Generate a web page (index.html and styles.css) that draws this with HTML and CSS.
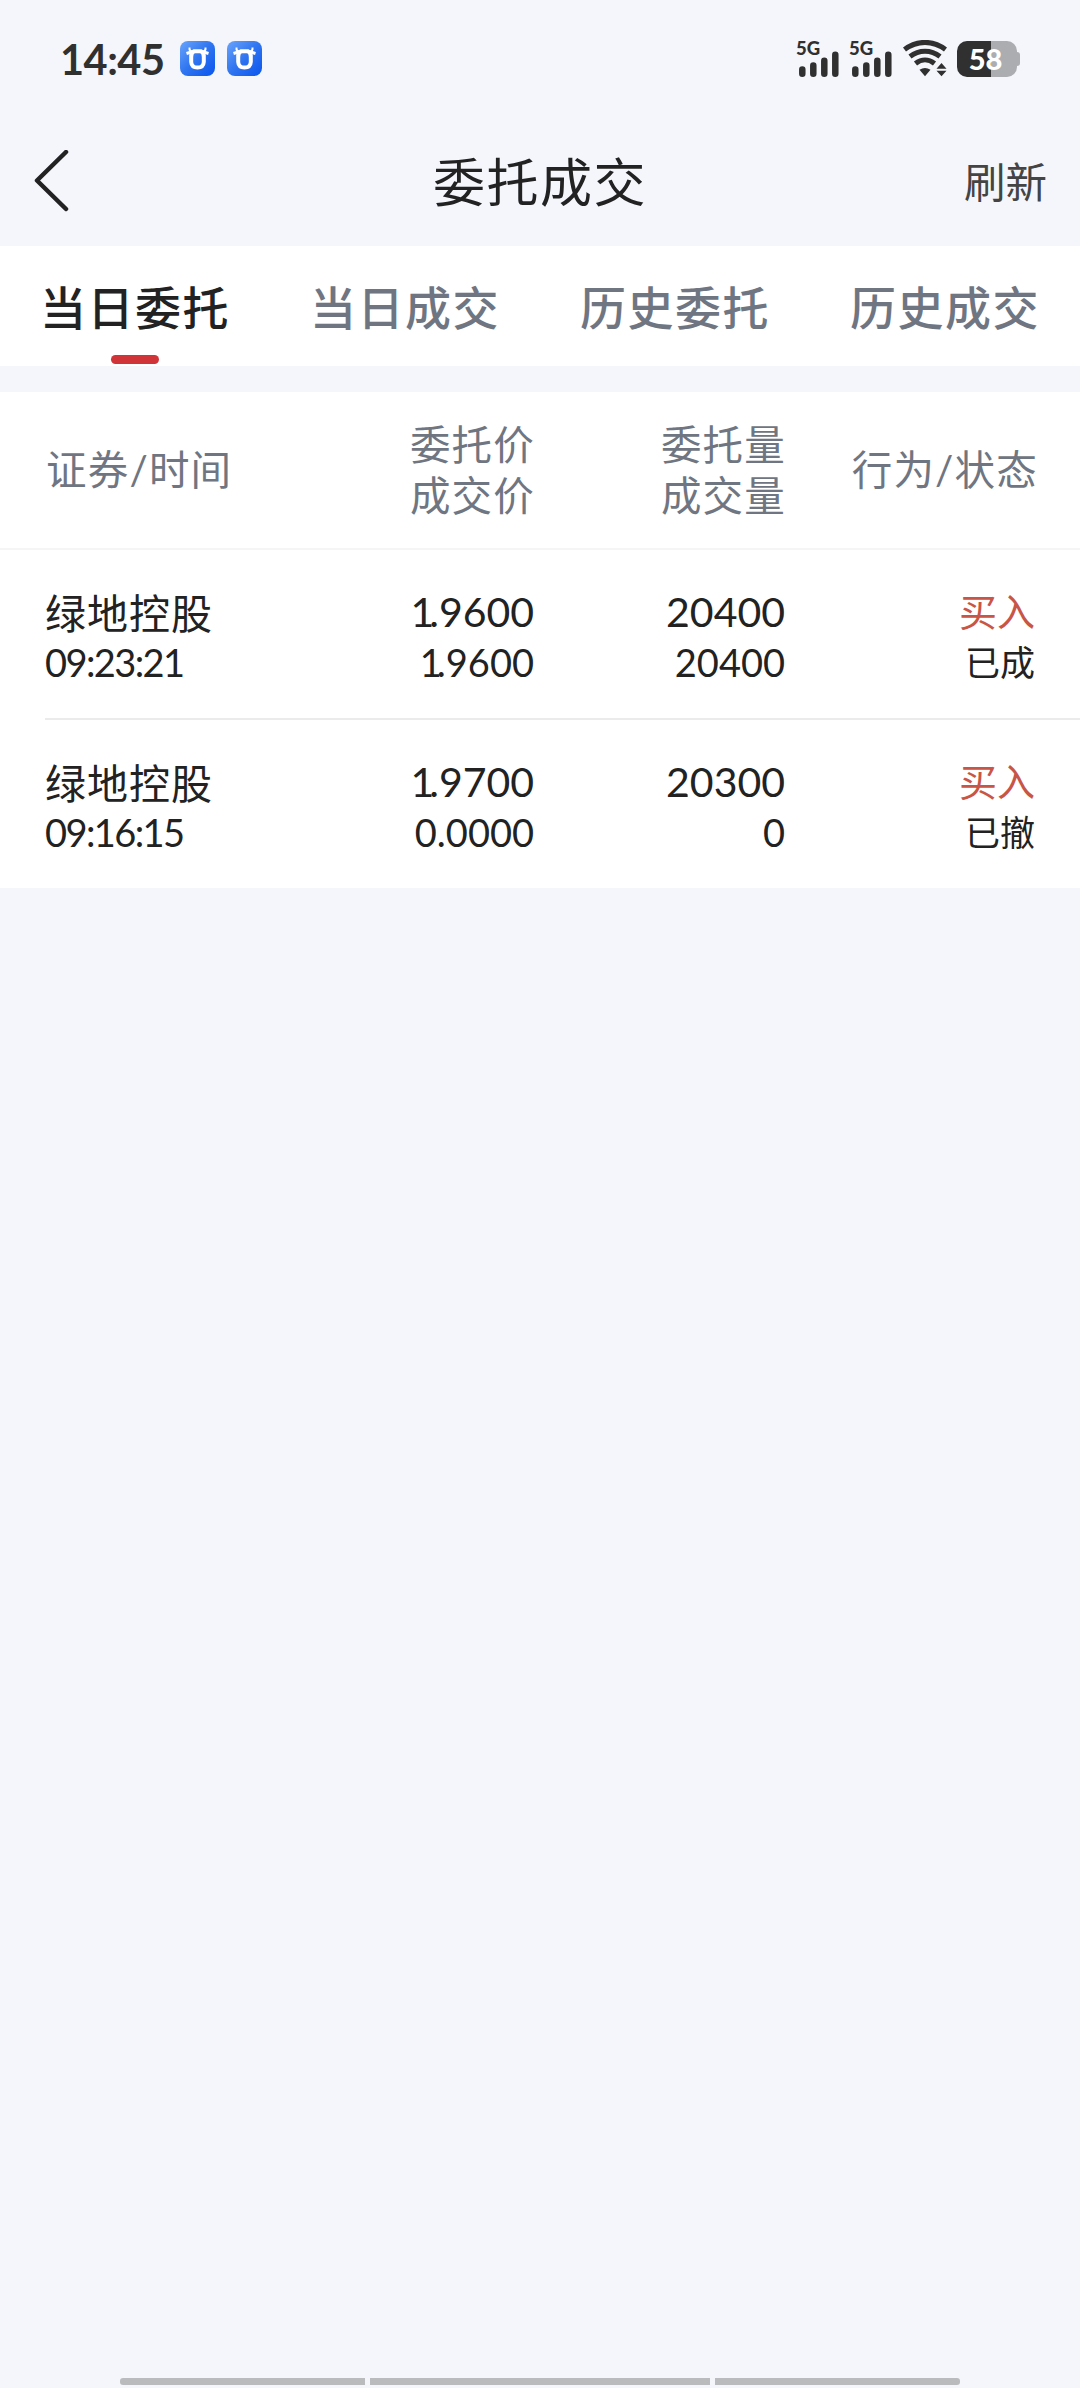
FILE: index.html
```html
<!DOCTYPE html>
<html lang="zh-CN">
<head>
  <meta charset="UTF-8">
  <title>委托成交</title>
  <link rel="stylesheet" href="styles.css">
</head>
<body>
  <div class="status-bar">
    <span class="clock">14:45</span>
    <svg class="app-icon" viewBox="0 0 35 35">
      <defs>
        <linearGradient id="appBlue" x1="0" y1="0" x2="1" y2="1">
          <stop offset="0" stop-color="#69a4fb"/>
          <stop offset="0.5" stop-color="#2f74f0"/>
          <stop offset="1" stop-color="#0a55ee"/>
        </linearGradient>
      </defs>
      <rect width="35" height="35" rx="8" fill="url(#appBlue)"/>
      <path d="M9.5 6.5C9.2 9 10.2 10.3 12.5 10.5M25.5 6.5C25.8 9 24.8 10.3 22.5 10.5" fill="none" stroke="#fff" stroke-width="2"/>
      <path d="M6.5 12.5L12 10.8M28.5 12.5L23 10.8" stroke="#fff" stroke-width="3"/>
      <path d="M14 10.3H21Q24 12 23.8 16V21Q23.5 26.5 17.5 26.5Q11.5 26.5 11.2 21V16Q11 12 14 10.3Z" fill="none" stroke="#fff" stroke-width="4"/>
    </svg>
    <svg class="app-icon" viewBox="0 0 35 35">
      <rect width="35" height="35" rx="8" fill="url(#appBlue)"/>
      <path d="M9.5 6.5C9.2 9 10.2 10.3 12.5 10.5M25.5 6.5C25.8 9 24.8 10.3 22.5 10.5" fill="none" stroke="#fff" stroke-width="2"/>
      <path d="M6.5 12.5L12 10.8M28.5 12.5L23 10.8" stroke="#fff" stroke-width="3"/>
      <path d="M14 10.3H21Q24 12 23.8 16V21Q23.5 26.5 17.5 26.5Q11.5 26.5 11.2 21V16Q11 12 14 10.3Z" fill="none" stroke="#fff" stroke-width="4"/>
    </svg>
    <div class="system-icons">
      <div class="signal">
        <span>5G</span>
        <svg viewBox="0 0 43 37">
          <path d="M5.3 29.5V33.7M16.3 25.5V33.7M27.3 20.7V33.7M38.3 14.7V33.7"/>
        </svg>
      </div>
      <div class="signal">
        <span>5G</span>
        <svg viewBox="0 0 43 37">
          <path d="M5.3 29.5V33.7M16.3 25.5V33.7M27.3 20.7V33.7M38.3 14.7V33.7"/>
        </svg>
      </div>
      <svg class="wifi" viewBox="0 0 44 37">
        <path class="arc" d="M1.5 9.5C14 0 30 0 42.5 9.5M7 16.5C16 9.5 28 9.5 37 16.5M12.5 23.5C18.5 18.7 25.5 18.7 31.5 23.5"/>
        <path d="M16.5 29.8Q22 26.3 27.5 29.8L22 36.3ZM38.5 23L43.5 28.8H33.5ZM33.5 30.7H43.5L38.5 36.3Z"/>
      </svg>
      <div class="battery">58</div>
    </div>
  </div>

  <div class="nav">
    <svg class="back" viewBox="0 0 36 64">
      <path d="M33 2L4 30.5L33 59"/>
    </svg>
    <h1>委托成交</h1>
    <span class="refresh">刷新</span>
  </div>

  <div class="tabs">
    <div class="tab active">当日委托</div>
    <div class="tab">当日成交</div>
    <div class="tab">历史委托</div>
    <div class="tab">历史成交</div>
  </div>

  <div class="orders">
    <div class="row head">
      <div class="name">证券/时间</div>
      <div class="price">委托价<br>成交价</div>
      <div class="amount">委托量<br>成交量</div>
      <div class="state">行为/状态</div>
    </div>
    <div class="row">
      <div class="name"><p class="cn">绿地控股</p><p class="sub time">09:23:21</p></div>
      <div class="price"><p><span class="one">1</span>.9600</p><p class="sub"><span class="one">1</span>.9600</p></div>
      <div class="amount"><p>20400</p><p class="sub">20400</p></div>
      <div class="state"><p class="buy">买入</p><p class="sub">已成</p></div>
    </div>
    <div class="row">
      <div class="name"><p class="cn">绿地控股</p><p class="sub time">09:16:15</p></div>
      <div class="price"><p><span class="one">1</span>.9700</p><p class="sub">0.0000</p></div>
      <div class="amount"><p>20300</p><p class="sub">0</p></div>
      <div class="state"><p class="buy">买入</p><p class="sub">已撤</p></div>
    </div>
  </div>

  <div class="gesture-bar">
    <i></i><i></i><i></i>
  </div>
</body>
</html>
```
FILE: styles.css
```css
* {
  box-sizing: border-box;
}

body {
  display: flex;
  flex-direction: column;
  width: 1080px;
  height: 2388px;
  margin: 0;
  background: #f4f6fb;
  color: #222;
  font-family: Lato, "Noto Sans CJK SC", sans-serif;
  overflow: hidden;
}

h1,
p {
  margin: 0;
  font-weight: 400;
}

svg {
  display: block;
}

/* 状态栏 */
.status-bar {
  display: flex;
  align-items: center;
  height: 117px;
  padding: 0 60px;
  color: #303030;
}

.clock {
  width: 120px;
  font-size: 41.5px;
  font-weight: 700;
  line-height: 50px;
  letter-spacing: -0.5px;
}

.app-icon {
  width: 35px;
  height: 35px;
  margin-right: 12px;
}

.system-icons {
  display: flex;
  align-items: center;
  margin-left: auto;
}

.signal {
  position: relative;
  width: 43px;
  height: 37px;
  margin-right: 10px;
}

.signal span {
  position: absolute;
  left: -1px;
  top: -4px;
  font-size: 18.5px;
  font-weight: 900;
  line-height: 24px;
}

.signal path {
  fill: none;
  stroke: #303030;
  stroke-width: 6.5;
  stroke-linecap: round;
}

.wifi {
  width: 44px;
  height: 37px;
  margin-right: 10px;
  fill: #303030;
}

.wifi .arc {
  fill: none;
  stroke: #303030;
  stroke-width: 5;
}

.battery {
  position: relative;
  width: 60px;
  height: 36px;
  margin-right: 3px;
  padding-right: 3px;
  border-radius: 10px;
  background: linear-gradient(90deg, #303030 34px, #acadb1 34px);
  color: #fff;
  font-size: 29px;
  font-weight: 900;
  line-height: 36px;
  text-align: center;
}

.battery::after {
  content: '';
  position: absolute;
  top: 11px;
  right: -3px;
  width: 3px;
  height: 14px;
  border-radius: 0 3px 3px 0;
  background: #acadb1;
}

/* 标题栏 */
.nav {
  display: grid;
  grid-template-columns: 200px 1fr 200px;
  align-items: center;
  height: 129px;
  padding: 0 33px;
}

.back {
  width: 36px;
  height: 64px;
  fill: none;
  stroke: #222;
  stroke-width: 4.5;
  stroke-linecap: round;
  stroke-linejoin: round;
}

.nav h1 {
  font-size: 52px;
  line-height: 70px;
  letter-spacing: 1.5px;
  text-align: center;
}

.refresh {
  color: #444;
  font-size: 41.5px;
  line-height: 60px;
  text-align: right;
}

/* 标签页 */
.tabs {
  display: grid;
  grid-template-columns: repeat(4, 1fr);
  height: 120px;
  background: #fff;
}

.tab {
  position: relative;
  color: #6f7682;
  font-size: 46px;
  font-weight: 500;
  line-height: 124px;
  letter-spacing: 1.5px;
  text-align: center;
}

.tab.active {
  color: #222;
}

.tab.active::after {
  content: '';
  position: absolute;
  left: 111px;
  top: 109px;
  width: 48px;
  height: 9px;
  border-radius: 5px;
  background: #d13438;
}

/* 委托列表 */
.orders {
  margin-top: 26px;
  background: #fff;
}

.row {
  display: grid;
  grid-template-columns: 249px 240px 251px 250px;
  height: 170px;
  margin-left: 45px;
  padding-top: 36px;
  border-bottom: 2px solid #ebebeb;
  font-size: 41px;
  line-height: 51px;
}

.row:last-child {
  height: 168px;
  border-bottom: 0;
}

.row.head {
  grid-template-columns: 250px 239px 251px 252px;
  align-items: center;
  height: 158px;
  margin-left: 0;
  padding: 0 0 1px 46px;
  border-bottom-color: #f5f5f5;
  color: #6f7682;
  font-size: 40.5px;
  letter-spacing: 1.2px;
}

.price,
.amount,
.state {
  text-align: right;
}

.sub {
  font-size: 38px;
}

.cn {
  padding-top: 4px;
  line-height: 47px;
  letter-spacing: 1px;
}

.time {
  letter-spacing: -1.6px;
}

/* 数字1字宽偏大，收紧 */
.one {
  letter-spacing: -5px;
}

.buy {
  color: #c85546;
  font-size: 38px;
}

.state .sub {
  font-size: 35px;
}

/* 底部手势条 */
.gesture-bar {
  display: flex;
  gap: 5px;
  width: 840px;
  height: 7px;
  margin: auto auto 3px;
}

.gesture-bar i {
  flex: 245;
  background: #babbbd;
}

.gesture-bar i:nth-child(2) {
  flex: 340;
}

.gesture-bar i:first-child {
  border-radius: 3px 0 0 3px;
}

.gesture-bar i:last-child {
  border-radius: 0 3px 3px 0;
}
```
